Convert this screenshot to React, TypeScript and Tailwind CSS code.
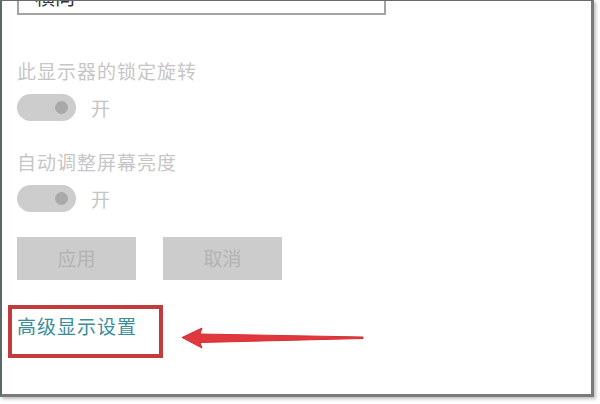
import React from "react";

const cjk = { fontFamily: '"Noto Sans CJK SC", "Noto Sans", sans-serif' };

function Toggle() {
  return (
    <div className="flex items-center h-[27px]">
      <div className="w-[59px] h-[27px] rounded-full bg-[#cdcdcd] flex items-center justify-end pr-[8px]">
        <div className="w-[13px] h-[13px] rounded-full bg-[#a9a9a9]" />
      </div>
      <span className="ml-[15px] text-[19px] leading-[27px] text-[#c4c4c4]">开</span>
    </div>
  );
}

export default function App() {
  return (
    <div className="w-[600px] h-[404px] bg-white overflow-hidden" style={cjk}>
      <div className="w-[594px] h-[397px] border-l-2 border-t border-l-[#5b6a68] border-t-[#6a6a6a] border-r-[3px] border-b-[3px] border-r-[#7a7a7a] border-b-[#7a7a7a] shadow-[2px_2px_3px_rgba(0,0,0,0.25)] overflow-hidden bg-white">
        <div className="pl-[15px] flex flex-col">
          <div className="-mt-[17px] w-[369px] h-[31px] border-2 border-[#a3a3a3] pl-[16px] text-[20px] leading-[22px] text-[#333]">
            横向
          </div>
          <div className="mt-[45px] text-[19px] leading-[22px] text-[#c6c6c6] tracking-[1px]">此显示器的锁定旋转</div>
          <div className="mt-[12px]">
            <Toggle />
          </div>
          <div className="mt-[30px] text-[19px] leading-[22px] text-[#c6c6c6] tracking-[1px]">自动调整屏幕亮度</div>
          <div className="mt-[12px]">
            <Toggle />
          </div>
          <div className="mt-[25px] flex gap-[27px]">
            <div className="w-[119px] h-[43px] bg-[#cccccc] flex items-center justify-center text-[19px] text-[#b3b3b3]">应用</div>
            <div className="w-[119px] h-[43px] bg-[#cccccc] flex items-center justify-center text-[19px] text-[#b3b3b3]">取消</div>
          </div>
          <div className="mt-[25px] flex items-start">
            <div className="-ml-[9px] w-[155px] h-[53px] border-[4px] border-[#c23c3e] pl-[5px] pt-[6px]">
              <span className="text-[19px] leading-[22px] text-[#3a8c99] tracking-[1px]">高级显示设置</span>
            </div>
            <svg className="ml-[17px] mt-[21px]" width="186" height="24" viewBox="0 0 186 24">
              <polygon
                points="2,11.5 22,2 20,8 183,11 183,12.5 20,16.5 22,22"
                fill="#e0383d"
                stroke="#d63035"
                strokeWidth="1"
                strokeLinejoin="round"
              />
            </svg>
          </div>
        </div>
      </div>
    </div>
  );
}
